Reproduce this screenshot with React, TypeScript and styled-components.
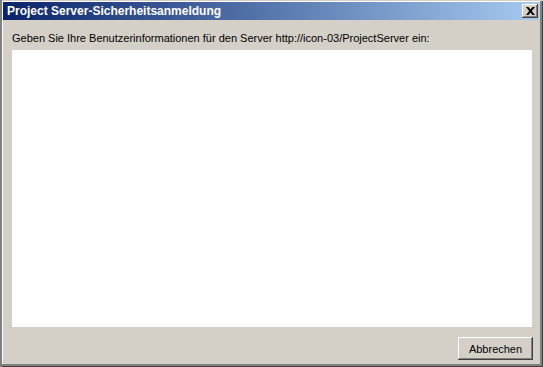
import React from 'react';
import styled, { createGlobalStyle } from 'styled-components';

const GlobalStyle = createGlobalStyle`
  html, body {
    margin: 0;
    padding: 0;
    background: #d4d0c8;
  }
  body {
    font-family: "Liberation Sans", Arial, sans-serif;
    font-size: 11px;
  }
`;

const Window = styled.div`
  width: 543px;
  height: 367px;
  box-sizing: border-box;
  background: #d4d0c8;
  display: flex;
  flex-direction: column;
  padding: 2px 4px 3px 3px;
  box-shadow:
    inset 2px 0 #808080,
    inset 0 1px #d4d0c8,
    inset -1px -1px #404040,
    inset -3px -3px #808080,
    inset 3px 2px #ffffff;
`;

const TitleBar = styled.div`
  height: 18px;
  flex: none;
  display: flex;
  align-items: center;
  justify-content: space-between;
  padding: 0 1px 0 4px;
  background: linear-gradient(to right, #0a246a, #a6caf0);
`;

const Title = styled.span`
  color: #fff;
  font-weight: bold;
  font-size: 12px;
`;

const CloseButton = styled.button`
  width: 16px;
  height: 14px;
  padding: 0;
  border: none;
  background: #d4d0c8;
  box-shadow:
    inset -1px -1px #404040,
    inset 1px 1px #ffffff,
    inset -2px -2px #808080;
  display: flex;
  align-items: center;
  justify-content: center;
`;

const Body = styled.div`
  flex: 1;
  display: flex;
  flex-direction: column;
  padding: 12px 7px 6px 9px;
`;

const Prompt = styled.div`
  color: #000;
  line-height: 13px;
  margin-bottom: 5px;
`;

const Frame = styled.div`
  height: 277px;
  background: #ffffff;
`;

const Footer = styled.div`
  display: flex;
  justify-content: flex-end;
  margin-top: 10px;
`;

const PushButton = styled.button<{ wide?: number }>`
  width: ${(p) => p.wide ?? 75}px;
  height: 23px;
  padding: 0;
  margin-right: -1px;
  border: none;
  background: #d4d0c8;
  font-family: "Liberation Sans", Arial, sans-serif;
  font-size: 11px;
  color: #000;
  box-shadow:
    inset -1px -1px #404040,
    inset 1px 1px #ffffff,
    inset -2px -2px #808080;
`;

export default function App() {
  return (
    <>
      <GlobalStyle />
      <Window>
        <TitleBar>
          <Title>Project Server-Sicherheitsanmeldung</Title>
          <CloseButton aria-label="Schließen">
            <svg width="9" height="8" viewBox="0 0 9 8">
              <path d="M0 0h2.5l2 2.6L6.5 0H9L5.8 4 9 8H6.5l-2-2.6L2.5 8H0l3.2-4z" fill="#000" />
            </svg>
          </CloseButton>
        </TitleBar>
        <Body>
          <Prompt>Geben Sie Ihre Benutzerinformationen für den Server http://icon-03/ProjectServer ein:</Prompt>
          <Frame />
          <Footer>
            <PushButton>Abbrechen</PushButton>
          </Footer>
        </Body>
      </Window>
    </>
  );
}
